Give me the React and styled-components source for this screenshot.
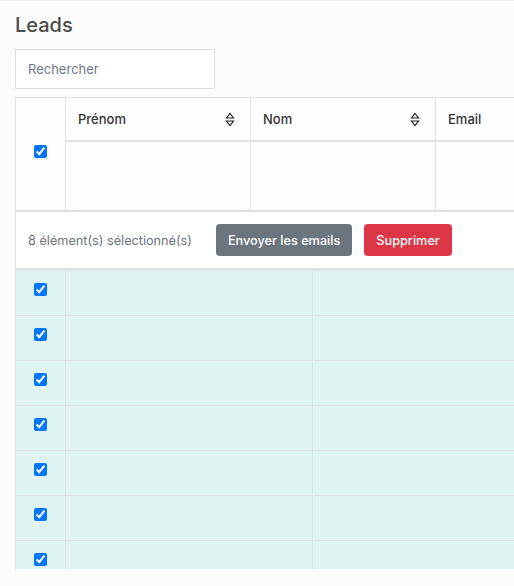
import React from 'react';
import styled, { createGlobalStyle } from 'styled-components';

const GlobalStyle = createGlobalStyle`
  html, body {
    margin: 0;
    padding: 0;
    background: #fcfcfc;
    overflow: hidden;
  }
  body {
    font-family: Inter, "Open Sans", sans-serif;
    color: #333;
  }
`;

const Page = styled.div`
  border-top: 1px solid #eeeeee;
  padding: 11px 15px 0;
  height: 585px;
  box-sizing: border-box;
`;

const Title = styled.h1`
  margin: 0 0 11px;
  font-size: 20px;
  line-height: 26px;
  font-weight: 500;
  color: #4a4a4a;
`;

const Search = styled.input`
  display: block;
  box-sizing: border-box;
  width: 200px;
  height: 40px;
  padding: 0 12px;
  border: 1px solid #dcdcdc;
  background: #fff;
  font-family: inherit;
  font-size: 13px;
  outline: none;
  &::placeholder {
    color: #6c7a89;
  }
`;

const TableWrap = styled.div`
  margin-top: 8px;
  width: 700px;
  height: 471px;
  overflow: hidden;
  border-top: 1px solid #dee2e6;
  border-left: 1px solid #dee2e6;
  background: #fff;
`;

const HeadGrid = styled.div`
  display: grid;
  grid-template-columns: 50px 185px 185px 1fr;
  grid-template-rows: 44px 70px;
`;

const HeadCell = styled.div`
  box-sizing: border-box;
  border-right: 1px solid #dee2e6;
  border-bottom: 2px solid #dee2e6;
  display: flex;
  align-items: center;
  justify-content: space-between;
  padding: 0 15px 0 12px;
  font-size: 13px;
  font-weight: 500;
  color: #333;
  background: #fefefe;
`;

const CheckHead = styled(HeadCell)`
  grid-row: 1 / 3;
  align-items: flex-start;
  justify-content: center;
  padding: 47px 0 0;
`;

const FilterCell = styled(HeadCell)``;

const Check = styled.input.attrs({ type: 'checkbox', defaultChecked: true })`
  width: 13px;
  height: 13px;
  margin: 0;
  accent-color: #0075ff;
`;

const SelectionBar = styled.div`
  display: flex;
  align-items: center;
  gap: 12px;
  height: 56px;
  padding: 0 12px;
  border-bottom: 3px solid #dee2e6;
  background: #fff;
`;

const SelectionText = styled.span`
  font-size: 12.7px;
  color: #6c757d;
  margin-right: 12px;
`;

const Button = styled.button`
  height: 32px;
  padding: 0 12px;
  border: none;
  border-radius: 4px;
  background: ${(p) => (p.$danger ? '#dc3545' : '#6c757d')};
  color: #fff;
  font-family: inherit;
  font-size: 12.7px;
  font-weight: 500;
`;

const Body = styled.div`
  background: #e0f4f3;
`;

const Row = styled.div`
  display: grid;
  grid-template-columns: 50px 247px 1fr;
  height: 45px;
  box-sizing: border-box;
  border-bottom: 1px solid #dee2e6;
`;

const Cell = styled.div`
  border-right: 1px solid #dee2e6;
  display: flex;
  align-items: flex-start;
  justify-content: ${(p) => (p.$center ? 'center' : 'flex-start')};
  padding-top: ${(p) => (p.$center ? '12px' : '0')};
`;

function SortIcon() {
  return (
    <svg width="10" height="15" viewBox="0 0 10 15" fill="none" stroke="#222" strokeWidth="1.2">
      <path d="M5 1.5 L8.5 6 L1.5 6 Z" />
      <path d="M1.5 9 L8.5 9 L5 13.5 Z" />
    </svg>
  );
}

const rows = [1, 2, 3, 4, 5, 6, 7, 8];

export default function App() {
  return (
    <>
      <GlobalStyle />
      <Page>
        <Title>Leads</Title>
        <Search placeholder="Rechercher" />
        <TableWrap>
          <HeadGrid>
            <CheckHead>
              <Check />
            </CheckHead>
            <HeadCell>
              Prénom <SortIcon />
            </HeadCell>
            <HeadCell>
              Nom <SortIcon />
            </HeadCell>
            <HeadCell>Email</HeadCell>
            <FilterCell />
            <FilterCell />
            <FilterCell />
          </HeadGrid>
          <SelectionBar>
            <SelectionText>8 élément(s) sélectionné(s)</SelectionText>
            <Button>Envoyer les emails</Button>
            <Button $danger>Supprimer</Button>
          </SelectionBar>
          <Body>
            {rows.map((r) => (
              <Row key={r}>
                <Cell $center>
                  <Check />
                </Cell>
                <Cell />
                <Cell />
              </Row>
            ))}
          </Body>
        </TableWrap>
      </Page>
    </>
  );
}
